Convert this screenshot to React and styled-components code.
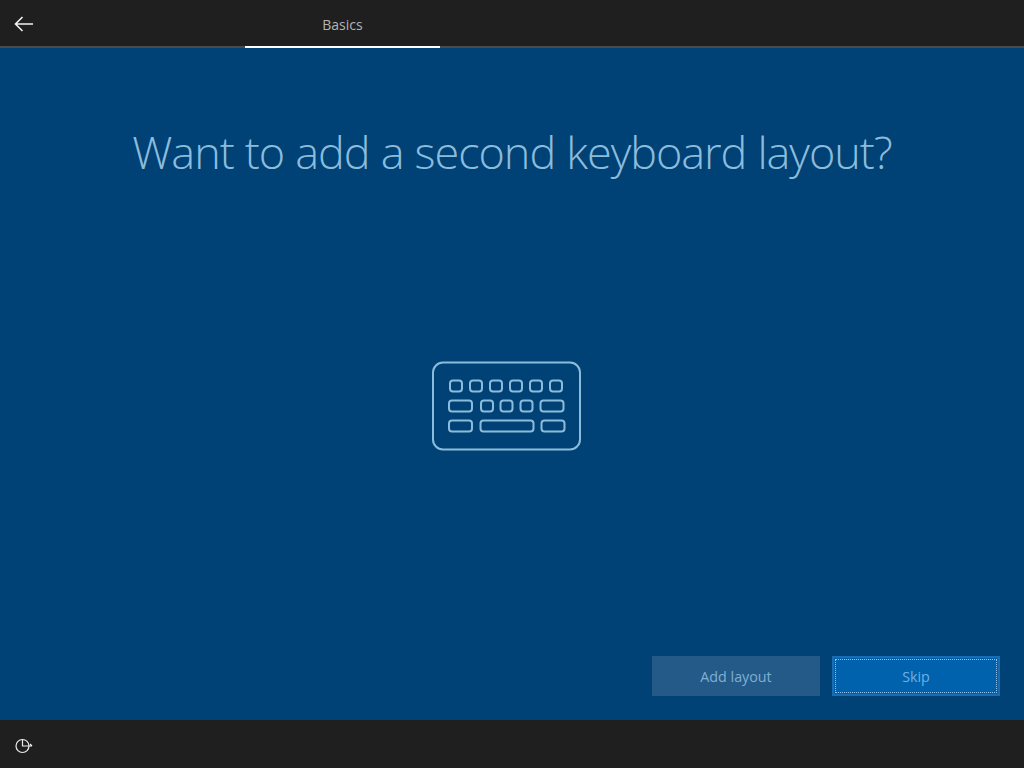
import React from "react";
import styled, { createGlobalStyle } from "styled-components";

const GlobalStyle = createGlobalStyle`
  html, body {
    margin: 0;
    padding: 0;
    height: 100%;
    background: #1f1f1f;
    font-family: "Open Sans", "Noto Sans", sans-serif;
  }
`;

const Page = styled.div`
  width: 1024px;
  height: 768px;
  display: flex;
  flex-direction: column;
  overflow: hidden;
`;

const Header = styled.header`
  height: 46px;
  flex: none;
  display: flex;
  background: #1f1f1f;
  border-bottom: 2px solid #4a4a4a;
`;

const BackButton = styled.div`
  width: 245px;
  flex: none;
  display: flex;
  align-items: center;
  padding: 2px 0 0 14px;
  box-sizing: border-box;
`;

const Tab = styled.div`
  width: 195px;
  height: 48px;
  flex: none;
  box-sizing: border-box;
  border-bottom: 2px solid #fff;
  display: flex;
  align-items: center;
  justify-content: center;
  padding-top: 2px;
  color: #b4b4b4;
  font-size: 14px;
`;

const Main = styled.main`
  flex: 1;
  background: #004275;
  display: flex;
  flex-direction: column;
  align-items: center;
  padding: 0 24px 24px;
  box-sizing: border-box;
`;

const Title = styled.h1`
  margin: 72px 0 0;
  font-size: 45px;
  line-height: 64px;
  font-weight: 300;
  color: #8cbcdc;
  letter-spacing: -1.05px;
  word-spacing: 0.5px;
  white-space: nowrap;
`;

const Illustration = styled.div`
  flex: 1;
  display: flex;
  justify-content: center;
  padding: 177px 10px 0 0;
`;

const Actions = styled.div`
  align-self: flex-end;
  display: flex;
  gap: 12px;
`;

const Button = styled.div`
  width: 168px;
  height: 40px;
  box-sizing: border-box;
  display: flex;
  align-items: center;
  justify-content: center;
  font-size: 14.3px;
  color: ${(p) => (p.$primary ? "#6fb0e4" : "#7fb0d4")};
  background: ${(p) => (p.$primary ? "#0062ad" : "#235a88")};
  border: ${(p) => (p.$primary ? "2px solid #1a6cb4" : "none")};
  outline: ${(p) => (p.$primary ? "1px dotted #8fc3ee" : "none")};
  outline-offset: -4px;
`;

const Footer = styled.footer`
  height: 48px;
  flex: none;
  background: #1f1f1f;
  display: flex;
  align-items: center;
  padding: 3px 0 0 15px;
  box-sizing: border-box;
`;

const keys = [
  [450, 381, 12], [470, 381, 12], [490, 381, 12], [510, 381, 12], [530, 381, 12], [550, 381, 12],
  [449, 401, 23], [481, 401, 12], [500.5, 401, 12], [520.5, 401, 12], [540.5, 401, 23],
  [449, 421, 23], [480.5, 421, 53], [541.5, 421, 23],
];

function KeyboardIcon() {
  return (
    <svg width="150" height="90" viewBox="432 361.5 150 90" fill="none" stroke="#8cbcdc" strokeWidth="2">
      <rect x="433" y="363" width="147" height="87" rx="10" />
      {keys.map(([x, y, w]) => (
        <rect key={`${x}-${y}`} x={x} y={y} width={w} height="11" rx="3" />
      ))}
    </svg>
  );
}

export default function App() {
  return (
    <Page>
      <GlobalStyle />
      <Header>
        <BackButton>
          <svg width="19" height="16" viewBox="0 0 19 16" fill="none" stroke="#f2f2f2" strokeWidth="1.6">
            <path d="M8.5 1 1.5 8l7 7M1.5 8H19" />
          </svg>
        </BackButton>
        <Tab>Basics</Tab>
      </Header>
      <Main>
        <Title>Want to add a second keyboard layout?</Title>
        <Illustration>
          <KeyboardIcon />
        </Illustration>
        <Actions>
          <Button>Add layout</Button>
          <Button $primary>Skip</Button>
        </Actions>
      </Main>
      <Footer>
        <svg width="18" height="16" viewBox="0 0 18 16" fill="none" stroke="#ededed" strokeWidth="1.2">
          <circle cx="7.5" cy="8" r="6.5" />
          <path d="M7.5 1.5V8H17M15 6l2 2" />
        </svg>
      </Footer>
    </Page>
  );
}
